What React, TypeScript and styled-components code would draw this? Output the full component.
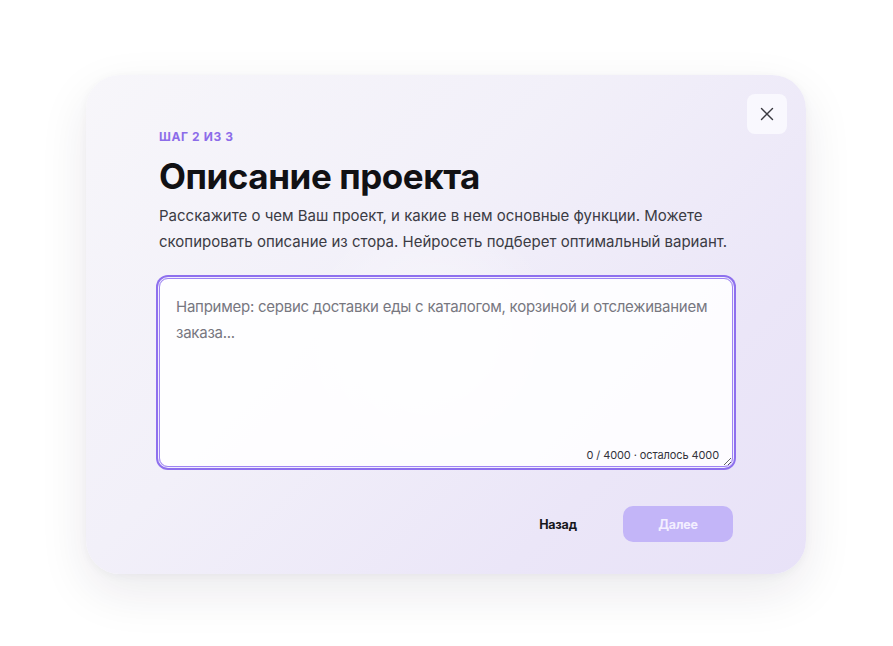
import * as React from 'react';
import styled, { createGlobalStyle } from 'styled-components';

const GlobalStyle = createGlobalStyle`
    html, body {
        margin: 0;
        padding: 0;
        background: #ffffff;
    }
    body {
        font-family: Inter, "Noto Sans", sans-serif;
        -webkit-font-smoothing: antialiased;
    }
`;

const Page = styled.div`
    width: 893px;
    height: 646px;
    display: flex;
    padding: 75px 0 0 86px;
    box-sizing: border-box;
`;

const Card = styled.div`
    position: relative;
    width: 720px;
    height: 499px;
    box-sizing: border-box;
    padding: 54px 73px 32px;
    border-radius: 34px;
    background:
        radial-gradient(circle at 48% 52%, rgba(255, 255, 255, 0.5) 0, rgba(255, 255, 255, 0) 28%),
        linear-gradient(135deg, #f7f6fa 0%, #f2f0f9 40%, #ebe6f8 75%, #e8e2f8 100%);
    box-shadow: 0 18px 50px rgba(30, 20, 60, 0.09), 0 2px 10px rgba(30, 20, 60, 0.04);
    display: flex;
    flex-direction: column;
`;

const CloseButton = styled.button`
    position: absolute;
    top: 19px;
    right: 19px;
    width: 40px;
    height: 40px;
    border: none;
    border-radius: 8px;
    background: #f9f8fe;
    display: flex;
    align-items: center;
    justify-content: center;
    padding: 0;
    cursor: pointer;
`;

const Step = styled.div`
    font-size: 12px;
    line-height: 16px;
    font-weight: 700;
    letter-spacing: 0.6px;
    color: #8c6ce9;
    margin-bottom: 10px;
`;

const Title = styled.h1`
    margin: 0 0 6px;
    font-size: 35px;
    line-height: 42px;
    font-weight: 700;
    letter-spacing: -0.45px;
    color: #111114;
`;

const Lead = styled.p`
    margin: 0 0 23px;
    font-size: 15px;
    line-height: 26px;
    color: #3b3b44;
    letter-spacing: 0;
`;

const Field = styled.div`
    position: relative;
    display: flex;
`;

const Area = styled.textarea`
    width: 100%;
    height: 189px;
    box-sizing: border-box;
    padding: 15px 12px 15px 16px;
    border: 1px solid #9e84f3;
    border-radius: 9px;
    background: rgba(255, 255, 255, 0.88);
    box-shadow: 0 0 0 1px #f1edfd, 0 0 0 3px #8e70ee;
    font-family: Inter, "Noto Sans", sans-serif;
    font-size: 15px;
    line-height: 26px;
    letter-spacing: -0.25px;
    color: #222;
    outline: none;
    resize: vertical;

    &::placeholder {
        color: #77777f;
    }
`;

const Counter = styled.span`
    position: absolute;
    right: 14px;
    bottom: 4px;
    font-size: 11px;
    line-height: 16px;
    letter-spacing: -0.1px;
    color: #33333a;
    pointer-events: none;
`;

const Actions = styled.div`
    margin-top: 39px;
    display: flex;
    justify-content: flex-end;
    gap: 10px;
`;

interface ActionButtonProps {
    readonly $primary?: boolean;
}

const ActionButton = styled.button<ActionButtonProps>`
    width: 110px;
    height: 36px;
    border: none;
    border-radius: 10px;
    font-family: Inter, "Noto Sans", sans-serif;
    font-size: 12.5px;
    font-weight: 700;
    letter-spacing: -0.2px;
    background: ${(props) => props.$primary ? '#c3b5f8' : 'transparent'};
    color: ${(props) => props.$primary ? '#f3efff' : '#17171b'};
    cursor: pointer;
`;

export default function App() {
    const [text, setText] = React.useState('');
    const max = 4000;

    return (
        <>
            <GlobalStyle />
            <Page>
                <Card>
                    <CloseButton aria-label="Закрыть">
                        <svg width="14" height="14" viewBox="0 0 14 14" fill="none">
                            <path d="M1.5 1.5L12.5 12.5M12.5 1.5L1.5 12.5" stroke="#3a3a40" strokeWidth="1.4" strokeLinecap="round" />
                        </svg>
                    </CloseButton>
                    <Step>ШАГ 2 ИЗ 3</Step>
                    <Title>Описание проекта</Title>
                    <Lead>
                        Расскажите о чем Ваш проект, и какие в нем основные функции. Можете
                        скопировать описание из стора. Нейросеть подберет оптимальный вариант.
                    </Lead>
                    <Field>
                        <Area
                            value={text}
                            maxLength={max}
                            onChange={(e) => setText(e.target.value)}
                            placeholder="Например: сервис доставки еды с каталогом, корзиной и отслеживанием заказа..."
                        />
                        <Counter>{text.length} / {max} · осталось {max - text.length}</Counter>
                    </Field>
                    <Actions>
                        <ActionButton>Назад</ActionButton>
                        <ActionButton $primary={true} disabled={true}>Далее</ActionButton>
                    </Actions>
                </Card>
            </Page>
        </>
    );
}
